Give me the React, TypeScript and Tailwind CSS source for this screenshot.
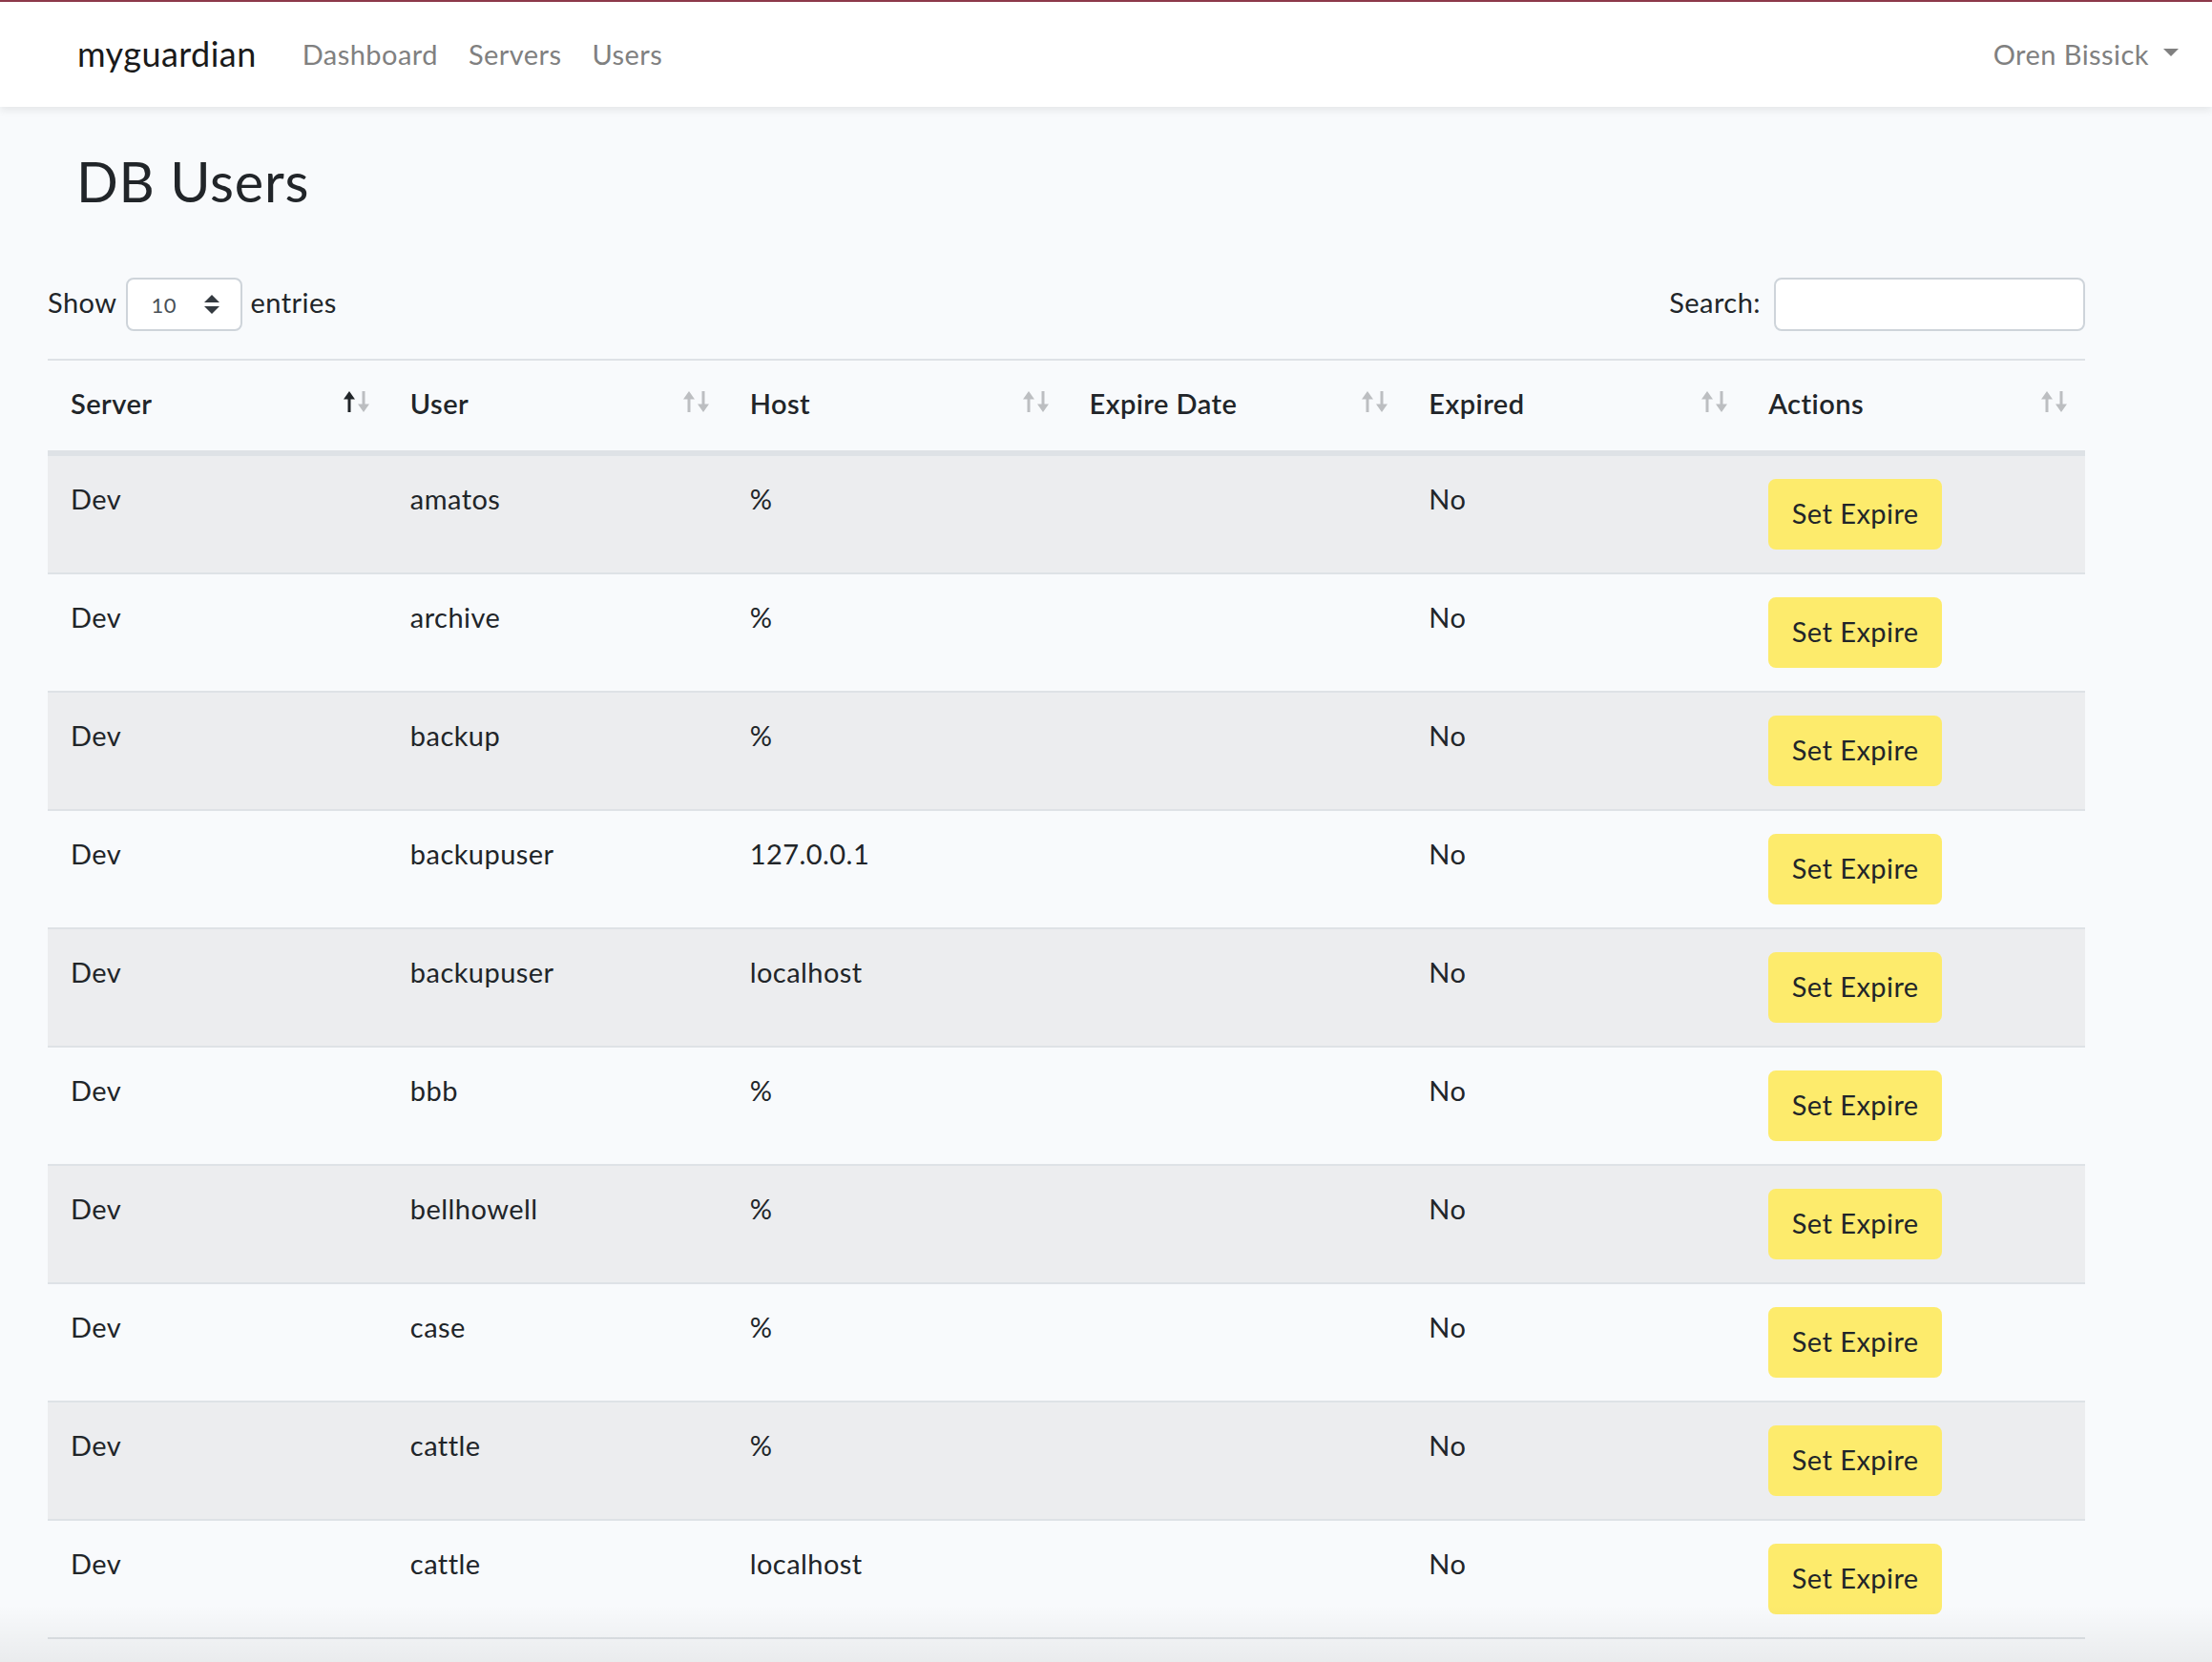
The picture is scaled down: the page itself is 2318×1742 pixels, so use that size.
import React from "react";

type Row = { server: string; user: string; host: string; expire: string; expired: string };

const rows: Row[] = [
  { server: "Dev", user: "amatos", host: "%", expire: "", expired: "No" },
  { server: "Dev", user: "archive", host: "%", expire: "", expired: "No" },
  { server: "Dev", user: "backup", host: "%", expire: "", expired: "No" },
  { server: "Dev", user: "backupuser", host: "127.0.0.1", expire: "", expired: "No" },
  { server: "Dev", user: "backupuser", host: "localhost", expire: "", expired: "No" },
  { server: "Dev", user: "bbb", host: "%", expire: "", expired: "No" },
  { server: "Dev", user: "bellhowell", host: "%", expire: "", expired: "No" },
  { server: "Dev", user: "case", host: "%", expire: "", expired: "No" },
  { server: "Dev", user: "cattle", host: "%", expire: "", expired: "No" },
  { server: "Dev", user: "cattle", host: "localhost", expire: "", expired: "No" },
];

const headers = ["Server", "User", "Host", "Expire Date", "Expired", "Actions"];

function ArrowUp() {
  return (
    <svg width="14" height="22" viewBox="0 0 14 22">
      <path d="M7 0 L13 8.5 H8.5 V22 H5.5 V8.5 H1 Z" fill="currentColor" />
    </svg>
  );
}

function ArrowDown() {
  return (
    <svg width="14" height="22" viewBox="0 0 14 22">
      <path d="M7 22 L13 13.5 H8.5 V0 H5.5 V13.5 H1 Z" fill="currentColor" />
    </svg>
  );
}

function SortIcons({ active }: { active: boolean }) {
  return (
    <>
      <span className={`absolute right-[33px] top-[32px] ${active ? "text-[#212529]" : "text-[#bcbec1]"}`}>
        <ArrowUp />
      </span>
      <span className="absolute right-[18px] top-[32px] text-[#bcbec1]">
        <ArrowDown />
      </span>
    </>
  );
}

export default function App() {
  return (
    <div className="relative min-h-[1742px] overflow-hidden bg-[#f8fafc] font-['Lato',sans-serif] tracking-[0.45px] text-[#212529]">
      <div className="h-[2px] bg-[#8e3a4b]" />
      <nav className="relative z-10 flex h-[110px] items-center bg-white pl-[81px] pr-[19px] shadow-[0_4px_8px_rgba(0,0,0,0.075)]">
        <span className="mr-[32px] text-[36px] leading-[1.6] text-[#1a1a1a]">myguardian</span>
        <ul className="flex text-[29px] leading-[1.6] text-[#808080]">
          <li className="px-[16px]">Dashboard</li>
          <li className="px-[16px]">Servers</li>
          <li className="px-[16px]">Users</li>
        </ul>
        <div className="ml-auto flex items-center px-[16px] text-[29px] leading-[1.6] text-[#808080]">
          <span>Oren Bissick</span>
          <span className="ml-[15px] mt-[-3px] h-0 w-0 border-x-[8.5px] border-t-[8.5px] border-x-transparent border-t-[#808080]" />
        </div>
      </nav>

      <main className="pt-[43px]">
        <h2 className="ml-[80px] text-[57.6px] font-normal leading-[1.2] tracking-[0.8px]">DB Users</h2>

        <div className="ml-[50px] mt-[67px] w-[2135px]">
          <div className="flex h-[56px] items-center justify-between text-[29px] leading-[1.6]">
            <div className="flex items-center">
              <span className="mt-[-4px]">Show</span>
              <div className="ml-[10px] mr-[8px] flex h-[56px] w-[122px] items-center justify-between rounded-[8px] border-2 border-[#ced4da] bg-white pl-[24px] pr-[22px]">
                <span className="text-[22px] text-[#495057]">10</span>
                <svg width="16" height="20" viewBox="0 0 4 5">
                  <path d="M2 0L0 2h4zm0 5L0 3h4z" fill="#343a40" />
                </svg>
              </div>
              <span className="mt-[-4px]">entries</span>
            </div>
            <div className="flex items-center">
              <span className="mt-[-4px]">Search:</span>
              <div className="ml-[14px] h-[56px] w-[326px] rounded-[8px] border-2 border-[#ced4da] bg-white" />
            </div>
          </div>

          <div className="mt-[29px] border-t-2 border-[#dee2e6]">
            <div className="grid grid-cols-6 border-b-4 border-[#dee2e6]">
              {headers.map((h, i) => (
                <div key={h} className="relative px-[24px] pb-[26px] pt-[22px] text-[29px] font-semibold leading-[46px]">
                  {h}
                  <SortIcons active={i === 0} />
                </div>
              ))}
            </div>
            {rows.map((r, idx) => (
              <div
                key={idx}
                className={`grid grid-cols-6 border-t-2 border-[#dee2e6] ${idx % 2 === 0 ? "bg-[#ecedef]" : ""} ${idx === rows.length - 1 ? "border-b-2" : ""}`}
              >
                {[r.server, r.user, r.host, r.expire, r.expired].map((v, j) => (
                  <div key={j} className="px-[24px] pb-[26px] pt-[22px] text-[29px] leading-[46px]">
                    {v}
                  </div>
                ))}
                <div className="p-[24px]">
                  <button className="flex h-[74px] w-[182px] items-center justify-center rounded-[8px] bg-[#fdeb6c] pb-[2px] text-[29px] leading-[46px] text-[#212529]">
                    Set Expire
                  </button>
                </div>
              </div>
            ))}
          </div>
        </div>
      </main>

      <div className="pointer-events-none absolute bottom-0 left-0 h-[60px] w-full bg-gradient-to-b from-transparent to-[rgba(0,0,0,0.06)]" />
    </div>
  );
}
